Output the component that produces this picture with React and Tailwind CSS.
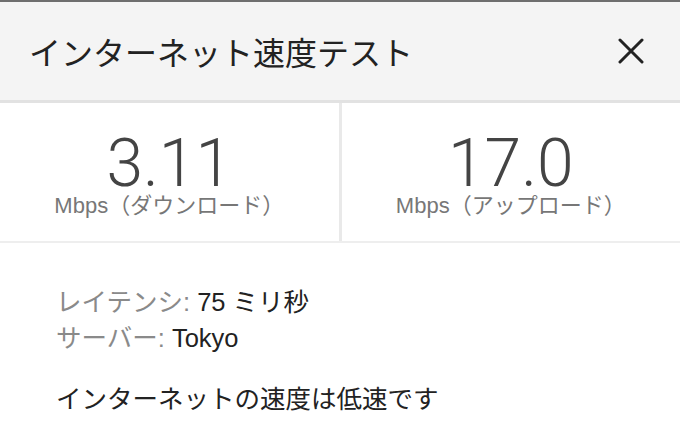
export default function App() {
  const sans = "font-['Liberation_Sans','Noto_Sans_CJK_JP',sans-serif]";

  return (
    <div className={`w-[680px] h-[431px] bg-white overflow-hidden ${sans}`}>
      <div className="h-[2px] bg-[#6e6e6e]" />

      {/* header */}
      <div className="h-[101px] bg-[#f4f4f4] flex items-center justify-between pl-[29px] pr-[36px] border-b-[3px] border-[#e2e2e2]">
        <h1 className="text-[32px] leading-none text-[#222] font-['Noto_Sans_CJK_JP',sans-serif] font-normal">
          インターネット速度テスト
        </h1>
        <svg viewBox="0 0 26 26" className="w-[26px] h-[26px]" fill="none" stroke="#222" strokeWidth="3" strokeLinecap="round">
          <path d="M2 2L24 24M24 2L2 24" />
        </svg>
      </div>

      {/* speeds */}
      <div className="grid grid-cols-[1fr_3px_1fr] h-[140px] border-b-2 border-[#eeeeee]">
        <Speed value="3.11" label="ダウンロード" />
        <div className="bg-[#e9e9e9]" />
        <Speed value="17.0" label="アップロード" />
      </div>

      {/* details */}
      <div className="pl-[56px] pt-[41px] text-[25.5px] leading-[36px]">
        <p>
          <span className="text-[#8a8a8a]">レイテンシ:</span>{" "}
          <span className="text-[#222]">75 ミリ秒</span>
        </p>
        <p>
          <span className="text-[#8a8a8a]">サーバー:</span>{" "}
          <span className="text-[#222]">Tokyo</span>
        </p>
        <p className="mt-[25px] text-[#222]">インターネットの速度は低速です</p>
      </div>
    </div>
  );
}

function Speed({ value, label }) {
  return (
    <div className="flex flex-col items-center pt-[33px]">
      <div className="text-[66px] leading-[56px] font-light text-[#444] font-['Roboto',sans-serif]">
        {value}
      </div>
      <div className="mt-[3px] text-[22px] leading-[22px] text-[#777]">
        Mbps（{label}）
      </div>
    </div>
  );
}
